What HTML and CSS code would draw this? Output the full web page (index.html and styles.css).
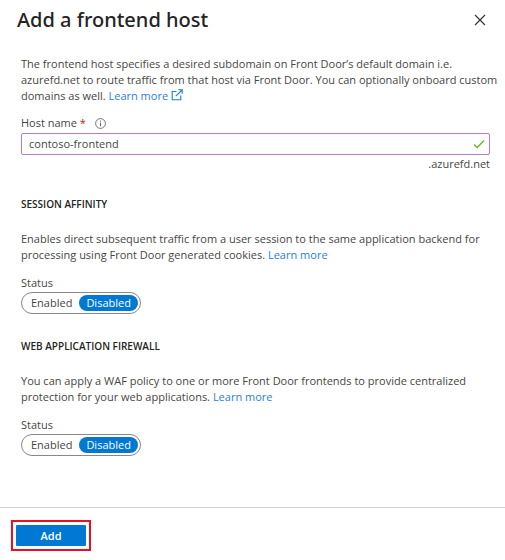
FILE: index.html
```html
<!DOCTYPE html>
<html lang="en">
<head>
<meta charset="utf-8">
<title>Add a frontend host</title>
<link rel="stylesheet" href="styles.css">
</head>
<body>
<form class="panel">
  <header class="panel-header">
    <h1>Add a frontend host</h1>
    <button class="close" type="button" aria-label="Close">
      <svg width="12" height="12" viewBox="0 0 12 12" aria-hidden="true"><path d="M1 1l10 10M11 1L1 11" fill="none" stroke="#333" stroke-width="1.2"/></svg>
    </button>
  </header>
  <main class="content">
    <p class="text intro">The frontend host specifies a desired subdomain on Front Door’s default domain i.e. azurefd.net to route traffic from that host via Front Door. You can optionally onboard custom domains as well. <a href="#">Learn more<svg class="external" width="12" height="12" viewBox="0 0 12 12" aria-hidden="true"><path d="M5.5 2.5H1.2v8.3h8.6V6.5M4.8 7.2L11 1M7.2 .8h4v4" fill="none" stroke="currentColor" stroke-width="1.1"/></svg></a></p>
    <div class="label-row">
      <label for="host">Host name <span class="required">*</span></label>
      <svg width="11" height="11" viewBox="0 0 11 11" aria-hidden="true"><circle cx="5.5" cy="5.5" r="4.9" fill="none" stroke="#666" stroke-width=".9"/><path d="M5.5 4.7v3.6M5.5 2.6v1.1" stroke="#666" fill="none"/></svg>
    </div>
    <div class="field">
      <input id="host" type="text" value="contoso-frontend">
      <svg class="check" width="12" height="10" viewBox="0 0 12 10" aria-hidden="true"><path d="M1 5.5l3.2 3L11 1.5" fill="none" stroke="#6bb52b" stroke-width="1.4"/></svg>
    </div>
    <div class="suffix">.azurefd.net</div>

    <section class="group">
      <h2>SESSION AFFINITY</h2>
      <p class="text">Enables direct subsequent traffic from a user session to the same application backend for processing using Front Door generated cookies. <a href="#">Learn more</a></p>
      <fieldset class="status">
        <legend>Status</legend>
        <div class="toggle">
          <label class="option"><input type="radio" name="affinity"><span>Enabled</span></label>
          <label class="option"><input type="radio" name="affinity" checked><span>Disabled</span></label>
        </div>
      </fieldset>
    </section>

    <section class="group">
      <h2>WEB APPLICATION FIREWALL</h2>
      <p class="text">You can apply a WAF policy to one or more Front Door frontends to provide centralized protection for your web applications. <a href="#">Learn more</a></p>
      <fieldset class="status">
        <legend>Status</legend>
        <div class="toggle">
          <label class="option"><input type="radio" name="waf"><span>Enabled</span></label>
          <label class="option"><input type="radio" name="waf" checked><span>Disabled</span></label>
        </div>
      </fieldset>
    </section>
  </main>
  <footer class="panel-footer">
    <div class="highlight"><button class="add" type="button">Add</button></div>
  </footer>
</form>
</body>
</html>
```
FILE: styles.css
```css
* {
  box-sizing: border-box;
}

body {
  margin: 0;
  background: #fff;
  color: #484644;
  font: 11px/16px "Open Sans", "Noto Sans", sans-serif;
}

h1,
h2,
p {
  margin: 0;
}

a {
  color: #1f7fdc;
  text-decoration: none;
}

button,
input {
  font: inherit;
}

.panel {
  display: flex;
  flex-direction: column;
  min-height: 100vh;
}

.panel-header {
  display: flex;
  align-items: center;
  justify-content: space-between;
  padding: 4px 17px 0;
}

h1 {
  color: #252423;
  font-family: "Noto Sans", "Open Sans", sans-serif;
  font-size: 20px;
  font-weight: 500;
  line-height: 32px;
}

.close {
  display: flex;
  padding: 2px;
  border: 0;
  background: none;
}

.content {
  flex: 1;
  padding: 20px 15px 0 21px;
}

.intro {
  margin-right: -8px;
}

.external {
  margin-left: 3px;
  vertical-align: -1px;
}

.label-row {
  display: flex;
  align-items: center;
  gap: 9px;
  margin-top: 11px;
}

.required {
  color: #a4262c;
}

.field {
  display: flex;
  align-items: center;
  height: 22px;
  margin-top: 2px;
  padding: 0 4px 0 7px;
  border: 1px solid #b27cc9;
  border-radius: 2px;
}

.field input {
  flex: 1;
  min-width: 0;
  padding: 0;
  border: 0;
  outline: 0;
  background: none;
  color: inherit;
}

.suffix {
  margin-top: 1px;
  text-align: right;
}

.group {
  margin-top: 24px;
}

h2 {
  color: #252423;
  font-size: 10px;
  font-weight: 600;
  line-height: 16px;
}

.group .text {
  margin-top: 19px;
}

.status {
  margin: 12px 0 0;
  padding: 0;
  border: 0;
}

.status legend {
  padding: 0;
}

.toggle {
  display: inline-flex;
  align-items: center;
  height: 22px;
  margin-top: 1px;
  padding: 0 2px;
  border: 1px solid #8a8886;
  border-radius: 11px;
  vertical-align: top;
}

.option {
  position: relative;
}

.option input {
  position: absolute;
  inset: 0;
  margin: 0;
  opacity: 0;
}

.option span {
  display: block;
  padding: 0 7px;
  border-radius: 8px;
}

.option input:checked + span {
  background: #0078d4;
  color: #fff;
}

.panel-footer {
  display: flex;
  padding: 12px 11px 9px;
  border-top: 1px solid #d2d0ce;
}

.highlight {
  padding: 3px;
  border: 2px solid #e81123;
}

.add {
  display: block;
  width: 70px;
  height: 21px;
  padding: 0;
  border: 0;
  border-radius: 1px;
  background: #0078d4;
  color: #fff;
  font-weight: 600;
}
```
